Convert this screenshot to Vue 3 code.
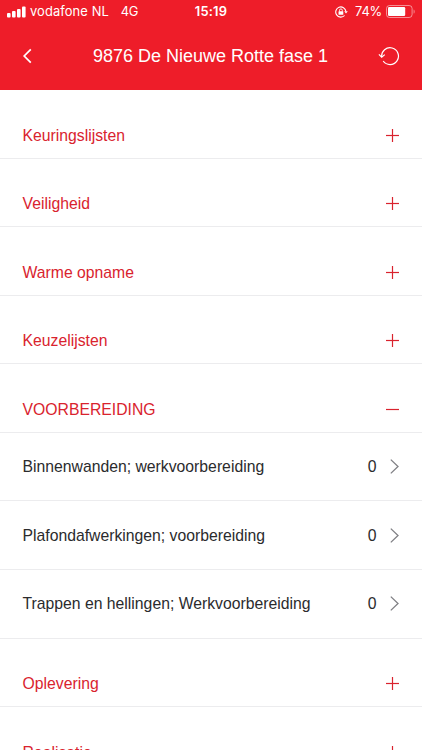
<script setup>
import { ref } from 'vue'

const title = '9876 De Nieuwe Rotte fase 1'

const groups = ref([
  { name: 'Keuringslijsten', open: false, items: [] },
  { name: 'Veiligheid', open: false, items: [] },
  { name: 'Warme opname', open: false, items: [] },
  { name: 'Keuzelijsten', open: false, items: [] },
  {
    name: 'VOORBEREIDING',
    open: true,
    items: [
      { name: 'Binnenwanden; werkvoorbereiding', count: 0 },
      { name: 'Plafondafwerkingen; voorbereiding', count: 0 },
      { name: 'Trappen en hellingen; Werkvoorbereiding', count: 0 }
    ]
  },
  { name: 'Oplevering', open: false, items: [] },
  { name: 'Realisatie', open: false, items: [] }
])

const toggle = (group) => {
  group.open = !group.open
}
</script>

<template>
  <div class="screen">
    <header class="header">
      <!-- status bar -->
      <div class="status-bar">
        <div class="status-left">
          <svg class="signal" width="19" height="12" viewBox="0 0 19 12" fill="#fff">
            <rect x="0" y="7" width="3.6" height="4.6" rx="1" />
            <rect x="5" y="5" width="3.6" height="6.6" rx="1" />
            <rect x="10" y="3" width="3.6" height="8.6" rx="1" />
            <rect x="15" y="0.6" width="3.6" height="11" rx="1" />
          </svg>
          <span class="carrier">vodafone NL</span>
          <span class="network">4G</span>
        </div>
        <div class="clock">15:19</div>
        <div class="status-right">
          <svg class="lock" width="13" height="12" viewBox="0 0 13 12" fill="none" stroke="#fff">
            <path d="M10.9 5.4A5.1 5.1 0 1 0 9.6 9.5" stroke-width="1.1" />
            <path d="M9.2 5.2h3.6L11 7.6z" fill="#fff" stroke="none" />
            <rect x="3.5" y="5.2" width="4.8" height="3.5" rx="0.5" fill="#fff" stroke="none" />
            <path d="M4.5 5.5V4.3a1.4 1.4 0 0 1 2.8 0v1.2" stroke-width="0.9" />
          </svg>
          <span class="percent">74%</span>
          <svg class="battery" width="29" height="13" viewBox="0 0 29 13">
            <rect x="0.5" y="0.5" width="25.6" height="12" rx="3" fill="none" stroke="#fff" stroke-opacity="0.5" />
            <rect x="2" y="2" width="17.2" height="9" rx="1.2" fill="#fff" />
            <path d="M27.6 4.4c1.4.5 1.4 3.7 0 4.2z" fill="#fff" fill-opacity="0.5" />
          </svg>
        </div>
      </div>

      <!-- navigation bar -->
      <nav class="nav-bar">
        <button class="nav-button back" aria-label="Terug">
          <svg width="10" height="16" viewBox="0 0 10 16" fill="none" stroke="#fff" stroke-width="1.7">
            <path d="M8.8 1.4L2.2 8l6.6 6.6" />
          </svg>
        </button>
        <h1 class="title">{{ title }}</h1>
        <button class="nav-button" aria-label="Vernieuwen">
          <svg width="22" height="20" viewBox="0 0 22 20" fill="none" stroke="#fff" stroke-width="1.2">
            <path d="M3.7 11A8.4 8.4 0 1 1 5.2 15" />
            <path d="M.9 8.3l2.8 2.8 3.1-2.5" />
          </svg>
        </button>
      </nav>
    </header>

    <main>
      <template v-for="group in groups" :key="group.name">
        <div class="row group" @click="toggle(group)">
          <span class="label">{{ group.name }}</span>
          <svg width="13" height="13" viewBox="0 0 13 13" stroke="#d9232e" stroke-width="1.2">
            <path d="M0 6.5h13" />
            <path v-if="!group.open" d="M6.5 0v13" />
          </svg>
        </div>
        <template v-if="group.open">
          <div v-for="item in group.items" :key="item.name" class="row item">
            <span class="label">{{ item.name }}</span>
            <span class="count">{{ item.count }}</span>
            <svg width="9" height="15" viewBox="0 0 9 15" fill="none" stroke="#808085" stroke-width="1.3">
              <path d="M.8 .6l7.2 6.9-7.2 6.9" />
            </svg>
          </div>
        </template>
      </template>
    </main>
  </div>
</template>

<style>
body {
  overflow: hidden;
  background: #fff;
}
</style>

<style scoped>
.screen {
  height: 750px;
  overflow: hidden;
  background: #fff;
  font-family: 'Liberation Sans', Arial, sans-serif;
}

.header {
  height: 90px;
  background: #ee1d29;
  color: #fff;
}

.status-bar {
  display: grid;
  grid-template-columns: 1fr auto 1fr;
  align-items: center;
  height: 24px;
  padding: 0 7px;
  font-family: Inter, sans-serif;
  font-size: 12.9px;
  line-height: 24px;
}

.status-left,
.status-right {
  display: flex;
  align-items: center;
}

.signal,
.lock,
.battery {
  margin-bottom: 1px;
}

.carrier {
  margin-left: 4px;
  letter-spacing: 0.1px;
}

.network {
  margin-left: 12px;
  letter-spacing: -0.3px;
}

.clock {
  font-weight: 600;
  letter-spacing: 0.2px;
}

.status-right {
  justify-content: flex-end;
}

.percent {
  margin: 0 4px 0 7px;
  letter-spacing: -0.2px;
}

.nav-bar {
  display: flex;
  align-items: center;
  height: 64px;
  padding: 0 22px;
}

.nav-button {
  display: flex;
  padding: 0;
  border: 0;
  background: none;
}

.back {
  width: 21px;
}

.title {
  flex: 1;
  margin: 0;
  font-size: 18px;
  font-weight: 400;
  line-height: 21px;
  text-align: center;
}

.row {
  display: flex;
  align-items: center;
  justify-content: space-between;
  box-sizing: border-box;
  height: 68.57px;
  padding: 0 23px 0 22.5px;
  border-bottom: 1px solid #ececee;
  font-size: 15.75px;
  line-height: 20px;
}

.label,
.count {
  padding-top: 1px;
}

.group {
  padding-top: 22.8px;
  color: #d9232e;
}

.item {
  color: #2b2b2d;
}

.count {
  margin: 0 13.5px 0 auto;
}
</style>
